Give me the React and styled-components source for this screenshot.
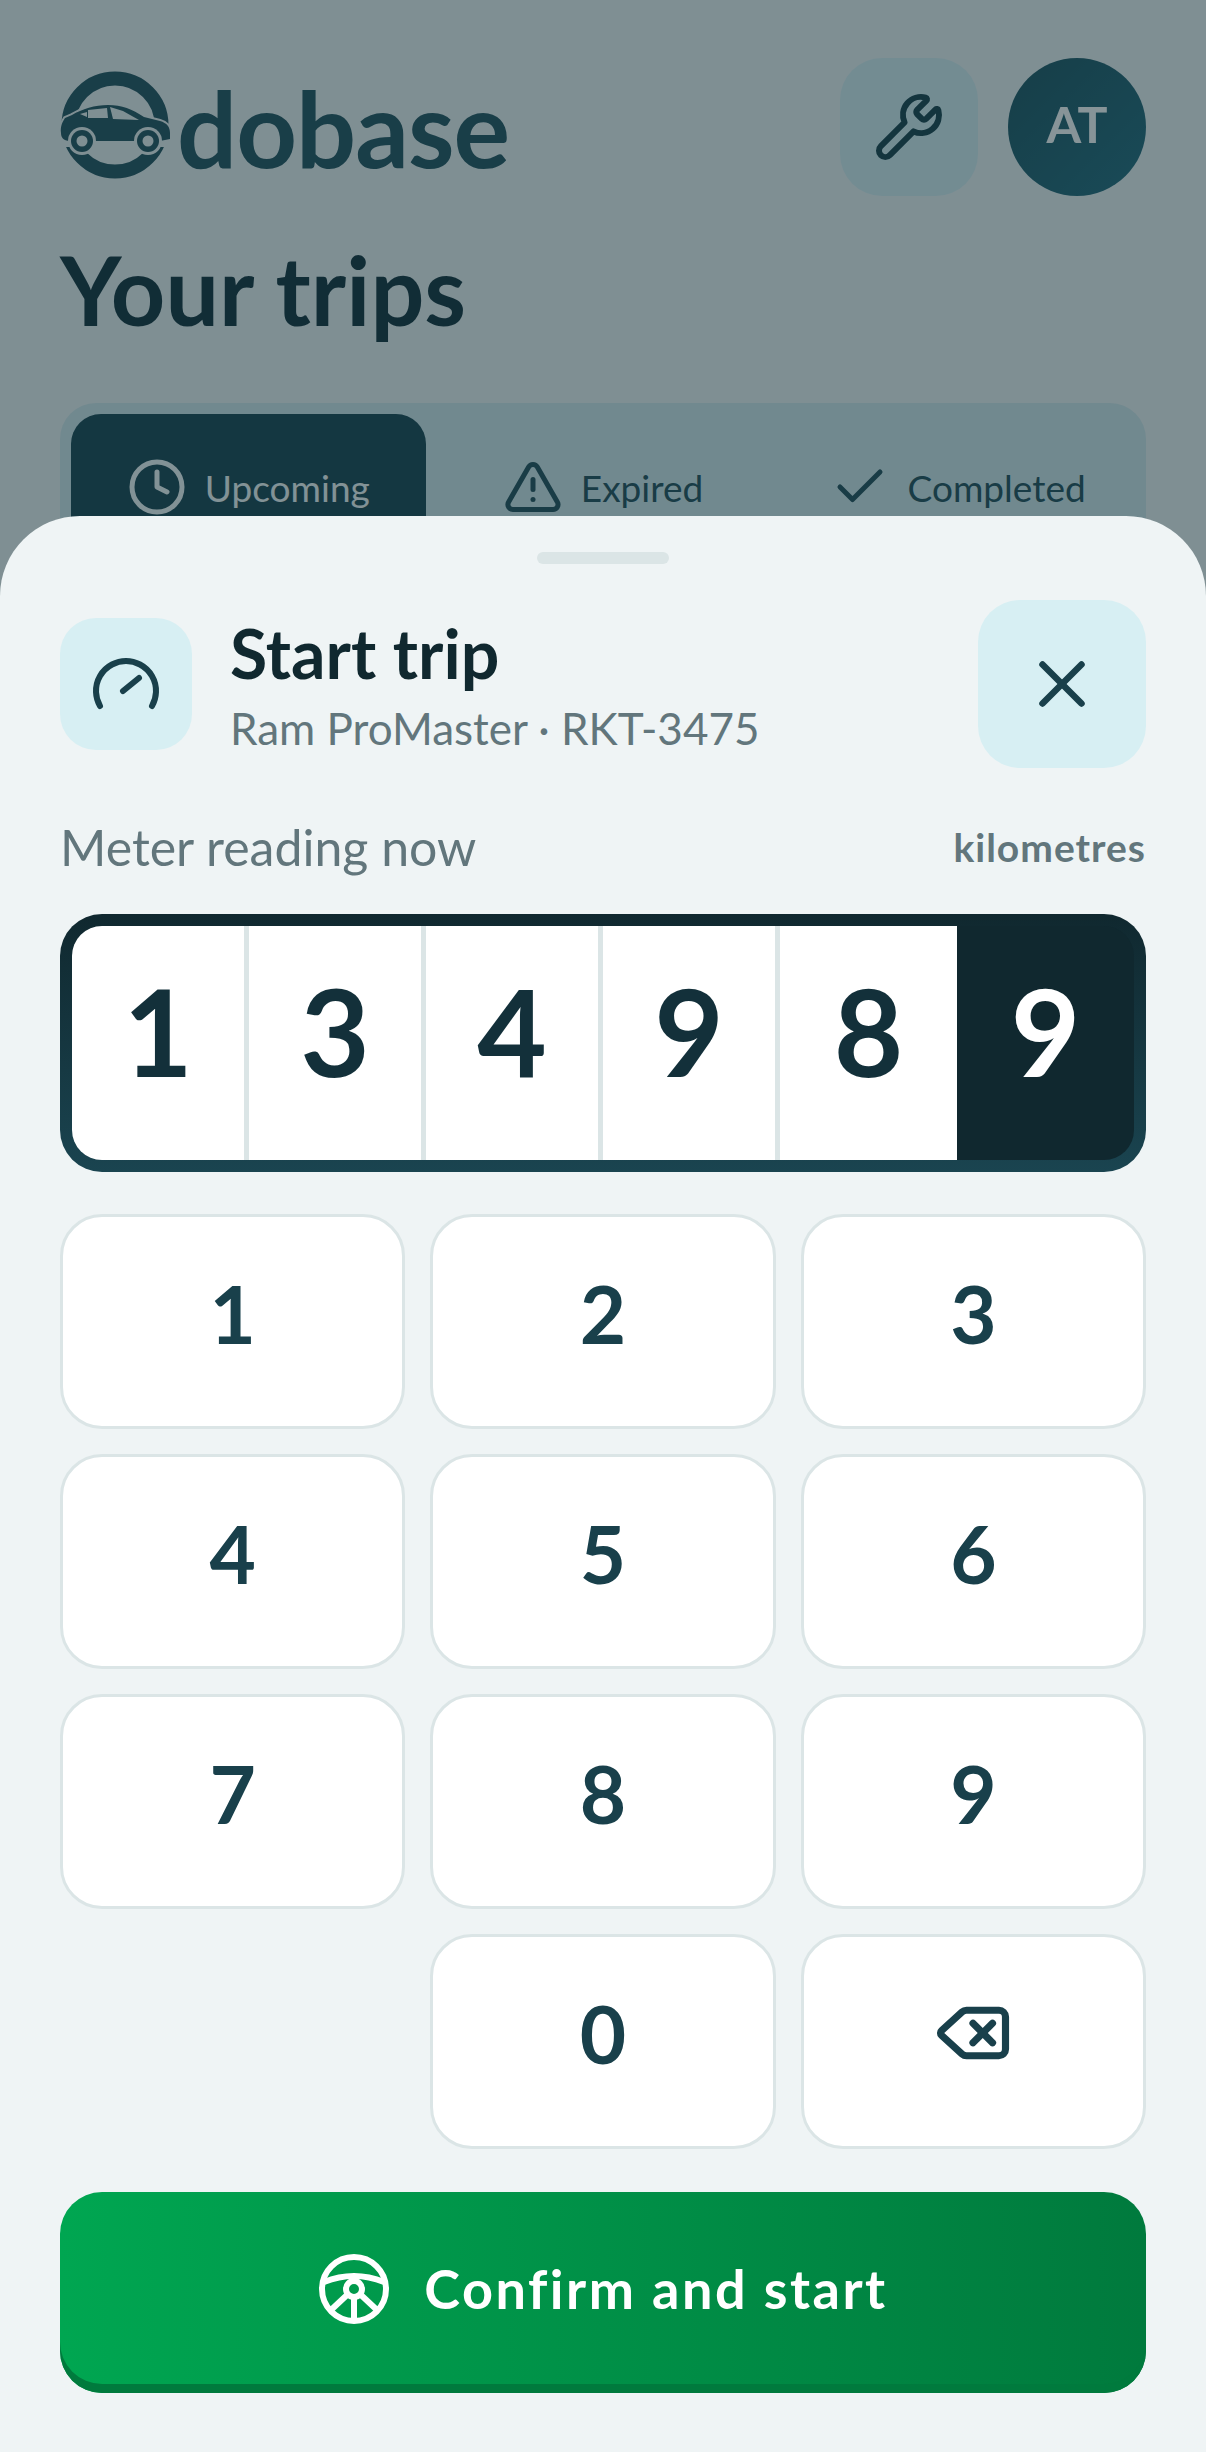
import React from 'react'
import styled, { createGlobalStyle } from 'styled-components'
import { Wrench, Clock, TriangleAlert, Check, X, Delete } from 'lucide-react'

const GlobalStyle = createGlobalStyle`
    html, body {
        margin: 0;
        padding: 0;
        background: #eff4f5;
    }
    body {
        font-family: "Lato", "Liberation Sans", sans-serif;
        color: #10282f;
    }
    * {
        box-sizing: border-box;
    }
`

const Screen = styled.div`
    position: relative;
    width: 1206px;
    height: 2452px;
    overflow: hidden;
    background: #eff4f5;
`

const Page = styled.div`
    padding: 58px 60px 0;
`

const TopBar = styled.header`
    display: flex;
    align-items: center;
    justify-content: space-between;
    height: 138px;
`

const Logo = styled.div`
    display: flex;
    align-items: center;
    gap: 5px;
    color: #23525e;
    font-size: 106px;
    font-weight: 700;
    line-height: 1;
    letter-spacing: -1px;
`

const TopActions = styled.div`
    display: flex;
    gap: 30px;
`

const ToolButton = styled.div`
    display: flex;
    align-items: center;
    justify-content: center;
    width: 138px;
    height: 138px;
    border-radius: 42px;
    background: #d7eff3;
    color: #19404b;
`

const Avatar = styled.div`
    display: flex;
    align-items: center;
    justify-content: center;
    width: 138px;
    height: 138px;
    border-radius: 50%;
    background: linear-gradient(135deg, #1d525e, #236c7e);
    color: #fff;
    font-size: 50px;
    font-weight: 700;
    padding-bottom: 6px;
`

const PageTitle = styled.h1`
    margin: 36px 0 0;
    font-size: 95px;
    font-weight: 700;
    line-height: 115px;
    color: #13303a;
`

const Tabs = styled.div`
    display: grid;
    grid-template-columns: repeat(3, 1fr);
    height: 168px;
    margin-top: 56px;
    padding: 11px;
    border-radius: 36px;
    background: #d3e8ec;
`

const Tab = styled.div`
    display: flex;
    align-items: center;
    justify-content: center;
    gap: 18px;
    border-radius: 30px;
    font-size: 37px;
    font-weight: 400;
    background: ${props => (props.$active ? '#194450' : 'transparent')};
    color: ${props => (props.$active ? '#f5fafa' : '#234e5a')};
`

const Scrim = styled.div`
    position: absolute;
    inset: 0;
    background: rgba(15, 42, 50, 0.5);
`

const Sheet = styled.section`
    position: absolute;
    left: 0;
    right: 0;
    top: 516px;
    bottom: 0;
    padding: 36px 60px 0;
    border-radius: 80px 80px 0 0;
    background: #eff4f5;
`

const Handle = styled.div`
    width: 132px;
    height: 12px;
    margin: 0 auto 36px;
    border-radius: 6px;
    background: #dbe5e6;
`

const SheetHeader = styled.div`
    display: flex;
    align-items: center;
    height: 168px;
`

const GaugeTile = styled.div`
    display: flex;
    align-items: center;
    justify-content: center;
    width: 132px;
    height: 132px;
    border-radius: 36px;
    background: #d7eff3;
`

const SheetText = styled.div`
    flex: 1;
    margin-left: 38px;
`

const SheetTitle = styled.h2`
    margin: 0;
    font-size: 68px;
    font-weight: 700;
    line-height: 80px;
    color: #10282f;
`

const SheetSub = styled.div`
    margin-top: 8px;
    font-size: 44px;
    line-height: 54px;
    color: #62767c;
`

const CloseButton = styled.div`
    display: flex;
    align-items: center;
    justify-content: center;
    width: 168px;
    height: 168px;
    border-radius: 42px;
    background: #d7eff3;
    color: #19404b;
`

const MeterLabelRow = styled.div`
    display: flex;
    align-items: center;
    justify-content: space-between;
    height: 60px;
    margin-top: 49px;
`

const MeterLabel = styled.span`
    font-size: 50px;
    color: #62767c;
`

const MeterUnit = styled.span`
    font-size: 39px;
    font-weight: 700;
    letter-spacing: 1px;
    color: #62767c;
`

const MeterFrame = styled.div`
    height: 258px;
    margin-top: 37px;
    padding: 12px;
    border-radius: 42px;
    background: linear-gradient(180deg, #10282f, #1a4450);
`

const MeterCells = styled.div`
    display: grid;
    grid-template-columns: repeat(6, 1fr);
    height: 100%;
    overflow: hidden;
    border-radius: 30px;
`

const MeterCell = styled.div`
    display: flex;
    align-items: center;
    justify-content: center;
    padding-bottom: 24px;
    font-size: 120px;
    font-weight: 700;
    line-height: 1;
    background: ${props => (props.$active ? '#10282f' : '#fff')};
    color: ${props => (props.$active ? '#fff' : '#13303a')};
    border-right: ${props => (props.$active || props.$beforeActive ? '0' : '5px solid #dbe5e6')};
`

const Keypad = styled.div`
    display: grid;
    grid-template-columns: repeat(3, 1fr);
    grid-auto-rows: 215px;
    gap: 25px;
    margin-top: 42px;
`

const Key = styled.div`
    display: flex;
    align-items: center;
    justify-content: center;
    padding-bottom: 18px;
    border: 3px solid #dbe5e6;
    border-radius: 42px;
    background: #fff;
    font-size: 80px;
    font-weight: 700;
    color: #19404b;
    grid-column: ${props => props.$column || 'auto'};
`

const ConfirmButton = styled.div`
    display: flex;
    align-items: center;
    justify-content: center;
    gap: 34px;
    height: 201px;
    margin-top: 43px;
    padding-bottom: 8px;
    border-radius: 42px;
    background: linear-gradient(90deg, #00a651, #007a3d);
    box-shadow: inset 0 -9px 0 #007a3d;
    color: #fff;
    font-size: 54px;
    font-weight: 700;
    letter-spacing: 2.5px;
`

const CarLogo = () => (
    <svg width="112" height="112" viewBox="0 0 112 112">
        <circle cx="55" cy="54" r="46.5" fill="none" stroke="#23525e" strokeWidth="14" />
        <rect x="0" y="68" width="112" height="8" fill="#eff4f5" />
        <path
            d="M1 62C0 55 3 50 5 47L12 44C22 38 35 34 48 34C62 34 72 38 84 46L100 50C107 52 110 56 110 62L110 68L100 70L10 70C3 70 1 66 1 62Z"
            fill="#23525e"
            stroke="#eff4f5"
            strokeWidth="4"
        />
        <path
            d="M1 62C0 55 3 50 5 47L12 44C22 38 35 34 48 34C62 34 72 38 84 46L100 50C107 52 110 56 110 62L110 68L100 70L10 70C3 70 1 66 1 62Z"
            fill="#23525e"
        />
        <path d="M28 39L47 37L48 47L28 47Z M50 36L63 40L79 49L53 48Z M20 43L27 41L27 46Z" fill="#eff4f5" />
        <circle cx="22" cy="70" r="14" fill="#eff4f5" />
        <circle cx="88" cy="70" r="14" fill="#eff4f5" />
        <circle cx="22" cy="70" r="11" fill="#23525e" />
        <circle cx="88" cy="70" r="11" fill="#23525e" />
        <circle cx="22" cy="70" r="5.5" fill="#eff4f5" />
        <circle cx="88" cy="70" r="5.5" fill="#eff4f5" />
    </svg>
)

const GaugeIcon = () => (
    <svg width="72" height="72" viewBox="0 0 72 72" fill="none" stroke="#19404b" strokeWidth="6" strokeLinecap="round">
        <path d="M10 58A30 30 0 1 1 62 58" />
        <path d="M33 43L49 30" />
    </svg>
)

const WheelIcon = () => (
    <svg width="72" height="72" viewBox="0 0 72 72" fill="none" stroke="#fff" strokeWidth="6" strokeLinecap="round">
        <circle cx="36" cy="36" r="32" />
        <path d="M6 29Q36 17 66 29" />
        <circle cx="36" cy="36" r="8" />
        <path d="M36 44V66M29 42L13 57M43 42L59 57" />
    </svg>
)

const digits = ['1', '3', '4', '9', '8', '9']
const keys = ['1', '2', '3', '4', '5', '6', '7', '8', '9']

export default function App() {
    return (
        <Screen>
            <GlobalStyle />
            <Page>
                <TopBar>
                    <Logo>
                        <CarLogo />
                        <span>dobase</span>
                    </Logo>
                    <TopActions>
                        <ToolButton>
                            <Wrench size={72} strokeWidth={2} />
                        </ToolButton>
                        <Avatar>AT</Avatar>
                    </TopActions>
                </TopBar>
                <PageTitle>Your trips</PageTitle>
                <Tabs>
                    <Tab $active>
                        <Clock size={60} strokeWidth={2} />
                        Upcoming
                    </Tab>
                    <Tab>
                        <TriangleAlert size={60} strokeWidth={2} />
                        Expired
                    </Tab>
                    <Tab>
                        <Check size={60} strokeWidth={2} />
                        Completed
                    </Tab>
                </Tabs>
            </Page>
            <Scrim />
            <Sheet>
                <Handle />
                <SheetHeader>
                    <GaugeTile>
                        <GaugeIcon />
                    </GaugeTile>
                    <SheetText>
                        <SheetTitle>Start trip</SheetTitle>
                        <SheetSub>Ram ProMaster · RKT-3475</SheetSub>
                    </SheetText>
                    <CloseButton>
                        <X size={78} strokeWidth={2} />
                    </CloseButton>
                </SheetHeader>
                <MeterLabelRow>
                    <MeterLabel>Meter reading now</MeterLabel>
                    <MeterUnit>kilometres</MeterUnit>
                </MeterLabelRow>
                <MeterFrame>
                    <MeterCells>
                        {digits.map((digit, index) => (
                            <MeterCell
                                key={index}
                                $active={index === 5}
                                $beforeActive={index === 4}
                            >
                                {digit}
                            </MeterCell>
                        ))}
                    </MeterCells>
                </MeterFrame>
                <Keypad>
                    {keys.map(key => (
                        <Key key={key}>{key}</Key>
                    ))}
                    <Key $column="2">0</Key>
                    <Key>
                        <Delete size={78} strokeWidth={2.2} />
                    </Key>
                </Keypad>
                <ConfirmButton>
                    <WheelIcon />
                    Confirm and start
                </ConfirmButton>
            </Sheet>
        </Screen>
    )
}
